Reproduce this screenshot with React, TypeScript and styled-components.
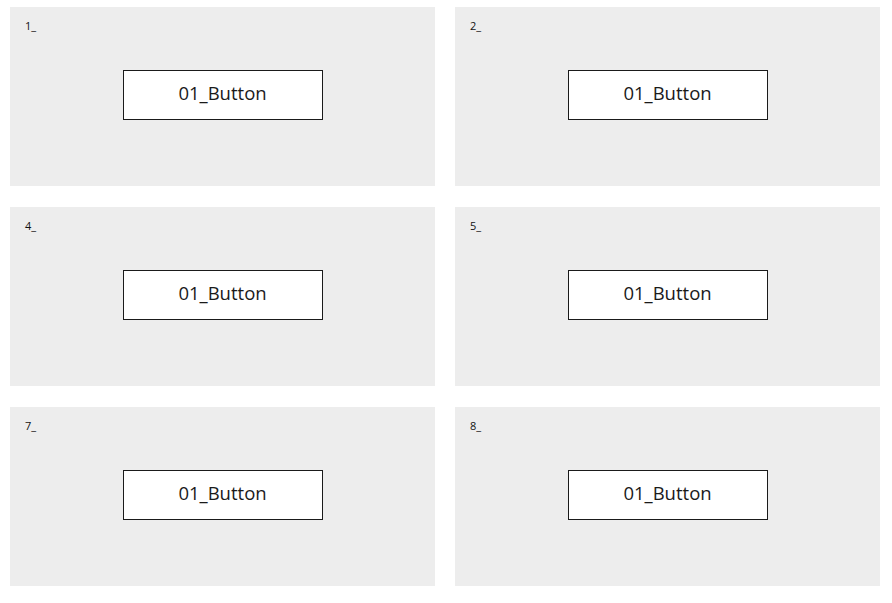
import styled, {createGlobalStyle} from 'styled-components';

const items = ['1_', '2_', '4_', '5_', '7_', '8_'];

function App() {
  return (
    <>
      <GlobalStyle />
      <Grid>
        {items.map((label) => (
          <Panel key={label}>
            <Label>{label}</Label>
            <Body>
              <Button>01_Button</Button>
            </Body>
          </Panel>
        ))}
      </Grid>
    </>
  );
}

export default App;

const GlobalStyle = createGlobalStyle`
  body {
    margin: 0;
    background: #ffffff;
    font-family: "Open Sans", "Liberation Sans", sans-serif;
  }
`;

const Grid = styled.div`
  display: grid;
  grid-template-columns: 425px 425px;
  grid-auto-rows: 179px;
  column-gap: 20px;
  row-gap: 21px;
  padding: 7px 0 0 10px;
`;

const Panel = styled.div`
  background-color: #ededed;
  display: flex;
  flex-direction: column;
  padding: 12px 15px 0;
`;

const Label = styled.div`
  font-size: 11px;
  line-height: 14px;
  height: 14px;
  color: #111;
`;

const Body = styled.div`
  display: flex;
  justify-content: center;
  padding-top: 37px;
`;

const Button = styled.button`
  width: 200px;
  height: 50px;
  box-sizing: border-box;
  background: #ffffff;
  border: 1px solid #1a1a1a;
  border-radius: 0;
  font-family: "Open Sans", "Liberation Sans", sans-serif;
  font-size: 18.5px;
  color: #1a1a1a;
  padding: 0 0 5px;
  margin: 0;
`;
